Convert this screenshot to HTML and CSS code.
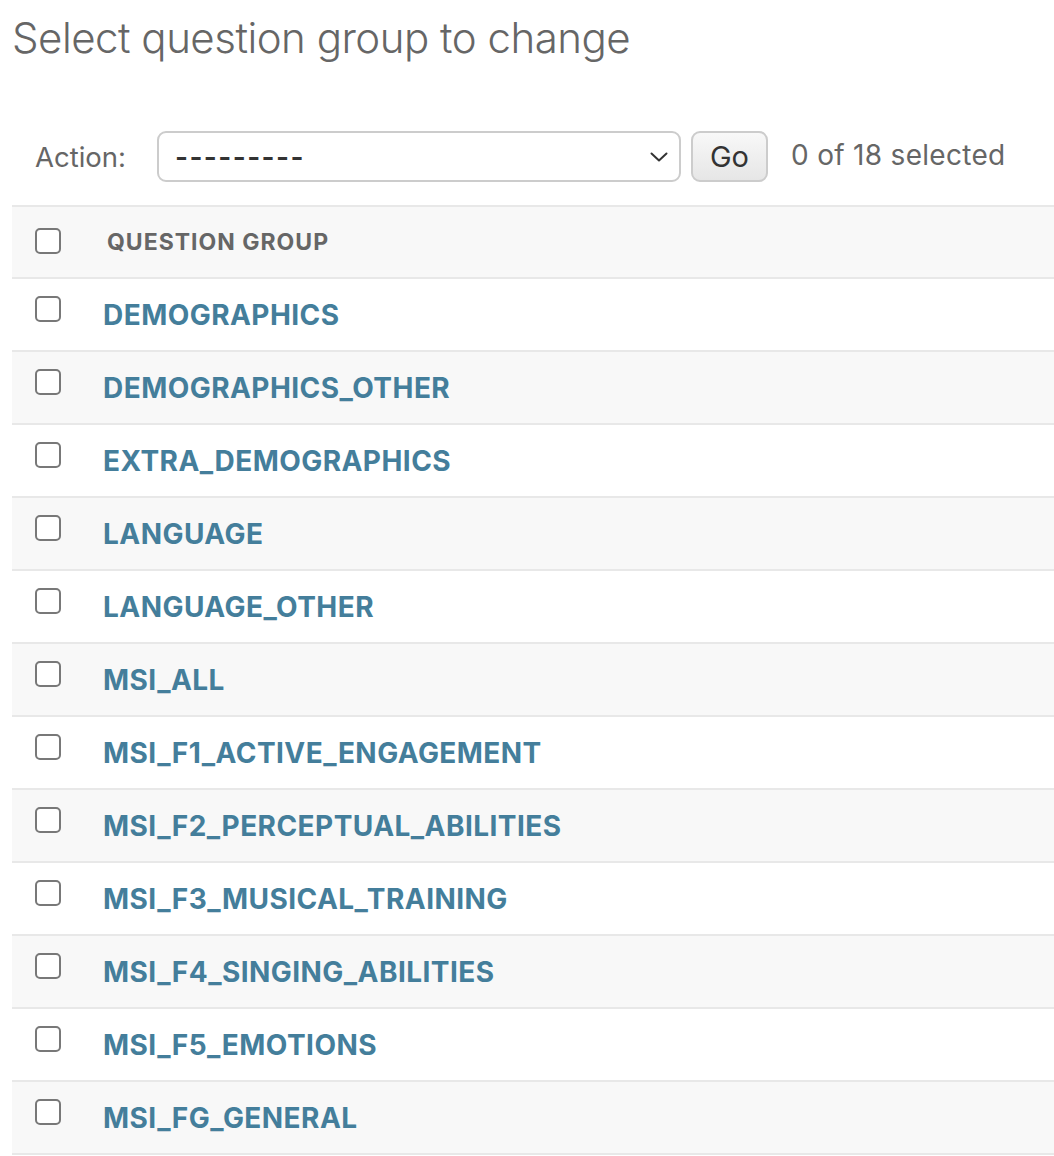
FILE: index.html
```html
<!DOCTYPE html>
<html>
<head>
<meta charset="utf-8">
<link rel="stylesheet" href="styles.css">
</head>
<body>
<div class="content">
  <h1 class="title">Select question group to change</h1>
  <div class="actions">
    <label class="action-label">Action:</label>
    <div class="select">
      <span class="select-text">---------</span>
      <svg class="chevron" width="18" height="10" viewBox="0 0 18 10"><path d="M1.5 1.5 L9 8.5 L16.5 1.5" fill="none" stroke="#333" stroke-width="2" stroke-linecap="round" stroke-linejoin="round"/></svg>
    </div>
    <button class="go">Go</button>
    <span class="counter">0 of 18 selected</span>
  </div>
  <div class="table">
    <div class="row head"><input type="checkbox" class="cb"><span class="col-head">Question group</span></div>
    <div class="row"><input type="checkbox" class="cb"><a class="link">DEMOGRAPHICS</a></div>
    <div class="row alt"><input type="checkbox" class="cb"><a class="link">DEMOGRAPHICS_OTHER</a></div>
    <div class="row"><input type="checkbox" class="cb"><a class="link">EXTRA_DEMOGRAPHICS</a></div>
    <div class="row alt"><input type="checkbox" class="cb"><a class="link">LANGUAGE</a></div>
    <div class="row"><input type="checkbox" class="cb"><a class="link">LANGUAGE_OTHER</a></div>
    <div class="row alt"><input type="checkbox" class="cb"><a class="link">MSI_ALL</a></div>
    <div class="row"><input type="checkbox" class="cb"><a class="link">MSI_F1_ACTIVE_ENGAGEMENT</a></div>
    <div class="row alt"><input type="checkbox" class="cb"><a class="link">MSI_F2_PERCEPTUAL_ABILITIES</a></div>
    <div class="row"><input type="checkbox" class="cb"><a class="link">MSI_F3_MUSICAL_TRAINING</a></div>
    <div class="row alt"><input type="checkbox" class="cb"><a class="link">MSI_F4_SINGING_ABILITIES</a></div>
    <div class="row"><input type="checkbox" class="cb"><a class="link">MSI_F5_EMOTIONS</a></div>
    <div class="row alt"><input type="checkbox" class="cb"><a class="link">MSI_FG_GENERAL</a></div>
  </div>
</div>
</body>
</html>
```
FILE: styles.css
```css
html, body {
  margin: 0;
  padding: 0;
  background: #fff;
}
body {
  font-family: Inter, "Noto Sans", sans-serif;
  color: #333;
  overflow: hidden;
}
.content {
  padding-left: 12px;
}
.title {
  margin: 0;
  padding-top: 10px;
  font-size: 42px;
  font-weight: 300;
  color: #666;
  line-height: 56px;
  letter-spacing: -0.5px;
}
.actions {
  display: flex;
  align-items: center;
  margin-top: 65px;
  height: 51px;
  padding-left: 23px;
}
.action-label {
  font-size: 27.5px;
  color: #666;
  margin-right: 31px;
}
.select {
  box-sizing: border-box;
  width: 524px;
  height: 51px;
  border: 2px solid #ccc;
  border-radius: 9px;
  display: flex;
  align-items: center;
  justify-content: space-between;
  padding: 0 11px 0 16px;
}
.select-text {
  font-size: 28px;
  font-weight: 600;
  color: #333;
  letter-spacing: 1.4px;
}
.go {
  box-sizing: border-box;
  margin-left: 10px;
  width: 77px;
  height: 51px;
  border: 2px solid #ccc;
  border-radius: 9px;
  background: linear-gradient(#f8f8f8, #e6e6e6);
  font-family: Inter, sans-serif;
  font-size: 29px;
  color: #333;
  padding: 0;
}
.counter {
  margin-left: 23px;
  font-size: 28px;
  letter-spacing: 0.3px;
  color: #666;
  margin-top: -4px;
}
.table {
  margin-top: 23px;
  border-top: 2px solid #e8e8e8;
}
.row {
  display: flex;
  align-items: flex-start;
  height: 71px;
  border-bottom: 2px solid #e8e8e8;
  box-sizing: content-box;
  padding-left: 23px;
}
.row.head {
  height: 70px;
}
.row.head, .row.alt {
  background: #f8f8f8;
}
.cb {
  appearance: none;
  -webkit-appearance: none;
  box-sizing: border-box;
  width: 26px;
  height: 26px;
  margin: 17px 0 0 0;
  border: 2px solid #787878;
  border-radius: 5px;
  background: #fff;
  flex: none;
}
.head .cb {
  margin-top: 21px;
}
.col-head {
  margin-left: 46px;
  margin-top: 22px;
  font-size: 23px;
  font-weight: 700;
  color: #666;
  text-transform: uppercase;
  letter-spacing: 1px;
  line-height: 26px;
}
.link {
  margin-left: 42px;
  margin-top: 19px;
  font-size: 28px;
  font-weight: 700;
  color: #447e9b;
  line-height: 34px;
  letter-spacing: 0.45px;
  text-decoration: none;
}
```
